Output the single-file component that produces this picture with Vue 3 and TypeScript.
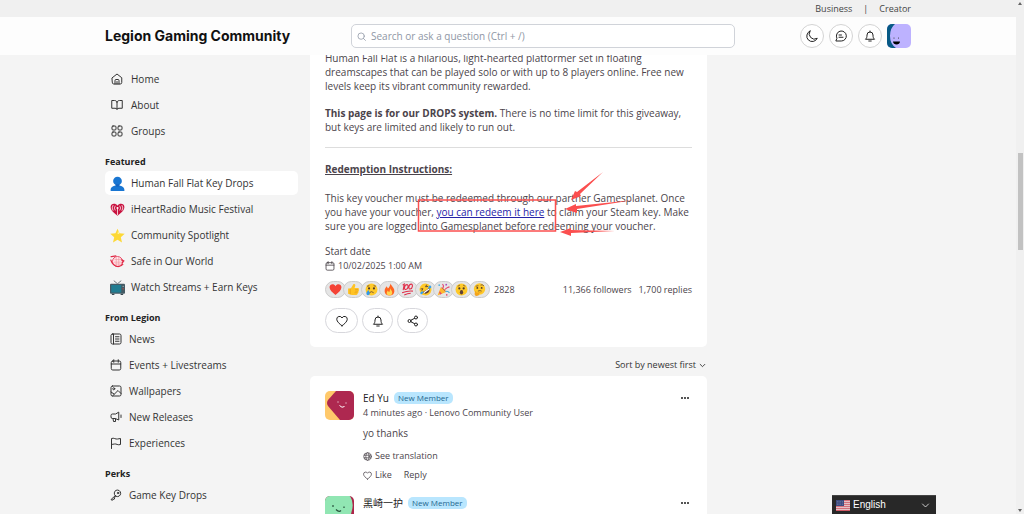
<script setup lang="ts">
import { ref } from 'vue'

interface NavItem {
  label: string
  icon: string
  color?: boolean
  active?: boolean
}
interface NavGroup {
  title?: string
  items: NavItem[]
}
interface Comment {
  name: string
  avatar: string
  meta: string
  body: string
}

const groups: NavGroup[] = [
  {
    items: [
      { label: 'Home', icon: 'home' },
      { label: 'About', icon: 'book' },
      { label: 'Groups', icon: 'grid' },
    ],
  },
  {
    title: 'Featured',
    items: [
      { label: 'Human Fall Flat Key Drops', icon: 'person', color: true, active: true },
      { label: 'iHeartRadio Music Festival', icon: 'iheart', color: true },
      { label: 'Community Spotlight', icon: 'star', color: true },
      { label: 'Safe in Our World', icon: 'globe-red', color: true },
      { label: 'Watch Streams + Earn Keys', icon: 'tv', color: true },
    ],
  },
  {
    title: 'From Legion',
    items: [
      { label: 'News', icon: 'news' },
      { label: 'Events + Livestreams', icon: 'calendar' },
      { label: 'Wallpapers', icon: 'image' },
      { label: 'New Releases', icon: 'horn' },
      { label: 'Experiences', icon: 'flag' },
    ],
  },
  {
    title: 'Perks',
    items: [{ label: 'Game Key Drops', icon: 'key' }],
  },
]

const reactions: string[] = ['heart', 'thumb', 'cry', 'fire', 'hundred', 'rofl', 'party', 'wow', 'think']

const comments: Comment[] = [
  { name: 'Ed Yu', avatar: 'av-red', meta: '4 minutes ago · Lenovo Community User', body: 'yo thanks' },
  { name: '黑崎一护', avatar: 'av-green', meta: '5 minutes ago · Lenovo Community User', body: 'thanks' },
]

const query = ref('')
const language = ref('English')
</script>

<template>
  <div class="shell">
    <svg class="defs" aria-hidden="true">
      <symbol id="home" viewBox="0 0 24 24"><path d="M2.500 9.500 12 2l9.500 7.500V19a3 3 0 0 1-3 3h-13a3 3 0 0 1-3-3zM8 22v-7a2 2 0 0 1 2-2h4a2 2 0 0 1 2 2v7M12 17v5" /></symbol>
      <symbol id="book" viewBox="0 0 24 24"><path d="M12 6v15M12 6c-1-2-3-3-5-3H1.500v15.500H8c2 0 3 .5 4 2 1-1.500 2-2 4-2h6.500V3H17c-2 0-4 1-5 3z" /></symbol>
      <symbol id="grid" viewBox="0 0 24 24"><rect x="2" y="2" width="8" height="8" rx="2" /><rect x="14" y="2" width="8" height="8" rx="2" /><rect x="2" y="14" width="8" height="8" rx="2" /><rect x="14" y="14" width="8" height="8" rx="2" /></symbol>
      <symbol id="news" viewBox="0 0 24 24"><rect x="2" y="2" width="20" height="20" rx="3" /><path d="M7 2v20M11 7.500h7M11 12h7M11 16.500h7" /></symbol>
      <symbol id="calendar" viewBox="0 0 24 24"><rect x="2.500" y="4" width="19" height="18" rx="3" /><path d="M2.500 10h19M7.500 1.500v5M16.500 1.500v5" /></symbol>
      <symbol id="image" viewBox="0 0 24 24"><rect x="2" y="2" width="20" height="20" rx="3" /><circle cx="7.500" cy="7.500" r="2" /><path d="M5 22 16 11l6 6M2 14l6 4" /></symbol>
      <symbol id="horn" viewBox="0 0 24 24"><path d="M17.500 3v15l-7-3H5a3 3 0 0 1-3-3V9a3 3 0 0 1 3-3h5.500zM6 15l1 6h4v-5M22 8v5" /></symbol>
      <symbol id="flag" viewBox="0 0 24 24"><path d="M3 23V3c5-2 8 2 12 1 2 0 4-1 6-1v12c-6 2-8-2-12-1-2 0-4 1-6 1" /></symbol>
      <symbol id="key" viewBox="0 0 24 24"><path d="m10.500 13.500-8 7V22H6l1-2h2v-3l3-2.500a6.500 6.500 0 1 0-1.500-1z" /><circle cx="16" cy="8" r="1.500" /></symbol>
      <symbol id="moon" viewBox="0 0 24 24"><path d="M8 2a11 11 0 1 0 14.500 14.500A10.500 10.500 0 0 1 8 2z" /></symbol>
      <symbol id="chat" viewBox="0 0 24 24"><path d="M2.500 22h10a10 10 0 1 0-9-6zM8 10h5M8 14.500h8" /></symbol>
      <symbol id="bell" viewBox="0 0 24 24"><path d="M3.500 18c2-2 2.500-4 2.500-8a6 6 0 0 1 12 0c0 4 .5 6 2.500 8zM9.500 22h5M12 2v2" /></symbol>
      <symbol id="like" viewBox="0 0 24 24"><path d="M12 21.500C7 18 1.500 13 1.500 8.500a5.500 5.500 0 0 1 10.500-2.500 5.500 5.500 0 0 1 10.500 2.500C22.500 13 17 18 12 21.500z" /></symbol>
      <symbol id="share" viewBox="0 0 24 24"><circle cx="5" cy="12" r="3" /><circle cx="18" cy="5" r="3" /><circle cx="18" cy="19" r="3" /><path d="m7.800 10.500 7.500-4M7.800 13.500l7.500 4" /></symbol>
      <symbol id="search" viewBox="0 0 24 24"><circle cx="11" cy="11" r="8.500" /><path d="m17.500 17.500 5 5" /></symbol>
      <symbol id="globe" viewBox="0 0 24 24"><circle cx="12" cy="12" r="10" /><ellipse cx="12" cy="12" rx="4.500" ry="10" /><path d="M3 8.500h18M3 15.500h18" /></symbol>
      <symbol id="chevron" viewBox="0 0 24 24"><path d="m4 8 8 8 8-8" /></symbol>

      <symbol id="person" viewBox="0 0 24 24"><circle cx="12" cy="8" r="7" fill="#1976d2" /><path d="M1 24v-2c0-5 5-6 7.500-7h7c2.500 1 7.500 2 7.500 7v2z" fill="#1976d2" /><path d="M9 13v3q3 2.500 6 0v-3z" fill="#1565c0" /></symbol>
      <symbol id="iheart" viewBox="0 0 24 24"><path d="M12 22C7 18 1 14 1 8c0-6 8-7 11-2 3-5 11-4 11 2 0 6-6 10-11 14z" fill="#c8123f" /><circle cx="12" cy="9.500" r="1.700" fill="#fff" /><path d="M12 11v10M8.500 6a6 6 0 0 0 0 7.500M15.500 6a6 6 0 0 1 0 7.500M5 5a8 8 0 0 0 0 9M19 5a8 8 0 0 1 0 9" fill="none" stroke="#fff" stroke-width="1.200" /></symbol>
      <symbol id="star" viewBox="0 0 24 24"><path d="m12 1 3.300 7.500 8.200.8-6.200 5.500 1.900 8.200L12 18.700 4.800 23l1.900-8.200L.5 9.300l8.200-.8z" fill="#fdd835" /><path d="m13 4 2 6-3-1z" fill="#fff59d" /></symbol>
      <symbol id="globe-red" viewBox="0 0 24 24"><circle cx="12" cy="12" r="8" fill="#ffe6e9" stroke="#e54360" stroke-width="1.500" /><path d="M1 4c3 1 7-1 9-1M1 9c2 6 6 11 12 11 4 0 6-1 8-4M18 9l4 2-3 4" fill="none" stroke="#e02945" stroke-width="2" /><path d="M7 9h11M6 13h13M8 16h9M10 6v12M14 5v14" stroke="#f0909d" stroke-width="1" /></symbol>
      <symbol id="tv" viewBox="0 0 24 24"><path d="m6 1 6 5 6-5" fill="none" stroke="#66737a" stroke-width="1.500" /><rect y="6" width="24" height="16" rx="1.500" fill="#455a64" /><rect x="2" y="8" width="16" height="12" fill="#207c91" /><circle cx="21" cy="10" r="1" fill="#b0bec5" /><circle cx="21" cy="14" r="1" fill="#f44336" /><path d="M3 22h4v2H3zM17 22h4v2h-4z" fill="#37474f" /></symbol>

      <symbol id="heart" viewBox="0 0 24 24"><path d="M12 22C6 18 1 13 1 8c0-6 8-8 11-2 3-6 11-4 11 2 0 5-5 10-11 14z" fill="#f44336" /></symbol>
      <symbol id="thumb" viewBox="0 0 24 24"><path d="M2 10h5l5-8c3-1 4 1 3 4l-1 3h6c2 0 3 2 1 3 2 1 1 3 0 3 1 2 0 3-1 3 0 2-1 4-3 4H9l-7-2z" fill="#ffc324" /><path d="M15 12h6M15 15h5M14 18h5M6 10v11" stroke="#e59a17" stroke-width="1.200" /></symbol>
      <symbol id="cry" viewBox="0 0 24 24"><circle cx="12" cy="12" r="11" fill="#ffc928" /><circle cx="7.500" cy="10" r="2" fill="#4b3828" /><circle cx="16.500" cy="10" r="2" fill="#4b3828" /><path d="M8 18q4-4 8 0M4 6l4-1M16 5l4 1" fill="none" stroke="#5d4037" stroke-width="1.500" /><path d="M6 13c-3 4-4 6-3 8 2 3 6 1 6-2 0-2-2-4-3-6z" fill="#3298e7" /></symbol>
      <symbol id="fire" viewBox="0 0 24 24"><path d="M14 1c1 5 7 7 7 14 0 5-4 8-9 8s-9-3-9-8c0-4 2-7 4-9l2 4c3-2 4-5 5-9z" fill="#ff6421" /><path d="M13 9c1 4 4 4 4 9 0 3-2 5-5 5s-6-2-5-6l2-3 2 3c2-2 2-5 2-8z" fill="#ffd54f" /></symbol>
      <symbol id="hundred" viewBox="0 0 24 24"><path d="m3 4 3-2-2 11M11 3c-5 0-6 10-2 9 5-1 5-9 2-9zM19 2c-5 0-6 10-2 9 5-1 5-9 2-9zM2 18q10-4 20-3M6 22q6-3 12-3" fill="none" stroke="#e0304a" stroke-width="2" /></symbol>
      <symbol id="rofl" viewBox="0 0 24 24"><g transform="rotate(-35 12 12)"><circle cx="12" cy="12" r="11" fill="#ffc928" /><path d="M5 13q7 2 14 0c0 9-14 9-14 0z" fill="#5d4037" /><path d="M6 14h12v2H6z" fill="#fff" /><path d="m5 6 4 2-4 2M19 6l-4 2 4 2" fill="none" stroke="#5d4037" stroke-width="1.500" /><ellipse cx="3" cy="13" rx="3" ry="2.500" fill="#34a0ea" /><ellipse cx="21" cy="13" rx="3" ry="2.500" fill="#34a0ea" /></g></symbol>
      <symbol id="party" viewBox="0 0 24 24"><path d="m1 23 6-15 9 9z" fill="#ffb82e" /><path d="m7 8 9 9q1-2-2-5t-7-4z" fill="#c66d1c" /><path d="M10 10c3-3 2-6 0-8M15 12c2-4 5-3 8-5" fill="none" stroke="#e8466a" stroke-width="2" /><path d="M16 16c3-2 5 0 7 2" fill="none" stroke="#36a8d8" stroke-width="2" /><circle cx="4" cy="4" r="1.500" fill="#3aa9dc" /><circle cx="17" cy="3" r="1.700" fill="#ae4bc0" /><circle cx="18" cy="22" r="1.500" fill="#eb4268" /><path d="m5 15 4 5-3 1-2-3z" fill="#e8466a" /></symbol>
      <symbol id="wow" viewBox="0 0 24 24"><circle cx="12" cy="12" r="11" fill="#ffc928" /><circle cx="8" cy="10" r="2" fill="#4b3828" /><circle cx="16" cy="10" r="2" fill="#4b3828" /><ellipse cx="12" cy="17" rx="3" ry="4" fill="#5d4037" /><path d="m5 6 4-2M15 4l4 2" stroke="#5d4037" stroke-width="1.300" /></symbol>
      <symbol id="think" viewBox="0 0 24 24"><circle cx="12" cy="11" r="10.500" fill="#ffc928" /><circle cx="8" cy="9" r="1.700" fill="#4b3828" /><circle cx="16" cy="9" r="1.700" fill="#4b3828" /><path d="m5 6 5-1M14 4q3-2 6 1M9 15q4-2 7 0" fill="none" stroke="#5d4037" stroke-width="1.400" /><path d="M4 15c2-1 2 3 3 3l7-2c2 0 2 2 0 2l-3 1c2 1 0 5-4 5s-5-4-3-9z" fill="#f4a51d" /></symbol>

      <symbol id="av-user" viewBox="0 0 24 24"><path d="M0 0h24v24H0z" fill="#bdb2ff" /><path d="M0 0h8Q3 4 3 12t6 12H0z" fill="#075985" /><circle cx="7" cy="14" r=".6" fill="#333" /><circle cx="11.500" cy="14" r=".6" fill="#333" /><path d="M6 17.500h7c0 4-7 4-7 0z" /></symbol>
      <symbol id="av-red" viewBox="0 0 29 29"><path d="M0 0h29v29H0z" fill="#ffc96b" /><path d="M11 0h18v29H15L3 15q-2-3 0-6z" fill="#ae2850" /><path d="M14.500 14.500q2.500 3 5 1M13 10.500v1M21 11.500v1" fill="none" stroke="#fff" stroke-width="1" /></symbol>
      <symbol id="av-green" viewBox="0 0 29 29"><path d="M0 0h29v29H0z" fill="#ad2449" /><path d="M0 0h25q4 6 2 14t-4 15H0z" fill="#91e6b3" /><path d="M11 13.500q3 3 5 1M8 9v2M19 10.500v1.500" fill="none" stroke="#27503b" stroke-width="1.200" /></symbol>
    </svg>

    <div class="page">
      <header class="head">
        <div class="top">
          <nav class="wrap top-links" aria-label="Sites">
            <a href="#business">Business</a><span>|</span><a href="#creator">Creator</a>
          </nav>
        </div>
        <div class="bar">
          <div class="wrap bar-in">
            <a class="brand" href="#home">Legion Gaming Community</a>
            <label class="search">
              <svg class="ico"><use href="#search" /></svg>
              <input v-model="query" type="search" aria-label="Search" placeholder="Search or ask a question (Ctrl + /)" />
            </label>
            <div class="tools">
              <button v-for="t in ['moon', 'chat', 'bell']" :key="t" class="round" :aria-label="t">
                <svg class="ico"><use :href="'#' + t" /></svg>
              </button>
              <button class="me" aria-label="Profile"><svg><use href="#av-user" /></svg></button>
            </div>
          </div>
        </div>
      </header>

      <div class="wrap columns">
        <nav class="side" aria-label="Community">
          <section v-for="(g, i) in groups" :key="i" class="group">
            <h2 v-if="g.title">{{ g.title }}</h2>
            <ul :class="{ wide: i < 2 }">
              <li v-for="n in g.items" :key="n.label">
                <a :href="'#' + n.icon" :class="{ active: n.active }">
                  <svg :class="n.color ? 'pic' : 'ico'"><use :href="'#' + n.icon" /></svg>
                  <span>{{ n.label }}</span>
                </a>
              </li>
            </ul>
          </section>
        </nav>

        <main class="feed">
          <article class="card post">
            <div class="prose">
              <p>Human Fall Flat is a hilarious, light-hearted platformer set in floating<br />dreamscapes that can be played solo or with up to 8 players online. Free new<br />levels keep its vibrant community rewarded.</p>
              <p><strong>This page is for our DROPS system.</strong> There is no time limit for this giveaway,<br />but keys are limited and likely to run out.</p>
              <hr />
              <h3>Redemption Instructions:</h3>
              <div class="marked">
                <p>This key voucher must be redeemed through our partner Gamesplanet. Once<br />you have your voucher, <a href="#redeem">you can redeem it here</a> to claim your Steam key. Make<br />sure you are logged into Gamesplanet before redeeming your voucher.</p>
                <svg class="marks" viewBox="0 0 310 70" aria-hidden="true">
                  <rect x="93.500" y="29" width="137" height="31" fill="none" stroke="#fb4f4f" stroke-width="1.500" />
                  <g fill="#fb4f4f">
                    <path d="m278 1-23 22 1 2-10 4 4-9 2 1z" />
                    <path d="m309 29-57 9v4l-12-4 11-5v2z" />
                    <path d="m290 60-44 2v3l-11-4 11-4v2z" />
                  </g>
                </svg>
              </div>
            </div>
            <div class="start">
              <span class="start-label">Start date</span>
              <span class="date"><svg class="ico"><use href="#calendar" /></svg>10/02/2025 1:00 AM</span>
            </div>
            <div class="stats">
              <div class="reactions">
                <button v-for="r in reactions" :key="r" :aria-label="r"><svg><use :href="'#' + r" /></svg></button>
              </div>
              <span>2828</span>
              <span class="followers">11,366 followers</span>
              <span>1,700 replies</span>
            </div>
            <div class="actions">
              <button v-for="a in ['like', 'bell', 'share']" :key="a" :aria-label="a">
                <svg class="ico"><use :href="'#' + a" /></svg>
              </button>
            </div>
          </article>

          <button class="sort">Sort by newest first <svg class="ico"><use href="#chevron" /></svg></button>

          <section class="card comments">
            <article v-for="c in comments" :key="c.name" class="comment">
              <svg class="avatar" aria-hidden="true"><use :href="'#' + c.avatar" /></svg>
              <div class="comment-main">
                <div class="who"><a href="#member">{{ c.name }}</a><span class="badge">New Member</span></div>
                <div class="meta">{{ c.meta }}</div>
                <p>{{ c.body }}</p>
                <button class="translate"><svg class="ico"><use href="#globe" /></svg>See translation</button>
                <div class="replies">
                  <button><svg class="ico"><use href="#like" /></svg>Like</button>
                  <button>Reply</button>
                </div>
              </div>
              <button class="more" aria-label="More"><i></i><i></i><i></i></button>
            </article>
          </section>
        </main>
      </div>
    </div>

    <div class="scroll" aria-hidden="true">
      <svg viewBox="0 0 8 8"><path d="m4 2 2 3H2z" /></svg>
      <div class="track"><div class="thumb"></div></div>
      <svg viewBox="0 0 8 8"><path d="m4 6 2-3H2z" /></svg>
    </div>

    <div class="lang">
      <svg class="us" viewBox="0 0 14 11" aria-hidden="true">
        <path d="M0 0h14v11H0z" fill="#ead9dc" />
        <path d="M0 .7h14M0 2.700h14M0 4.700h14M0 6.700h14M0 8.700h14M0 10.500h14" stroke="#cf5965" />
        <path d="M0 0h8v6H0z" fill="#3d4c80" />
        <path d="M1 1.500h6M1 3h6M1 4.500h6" stroke="#8d97b8" stroke-width=".6" stroke-dasharray=".7 1" />
      </svg>
      <select v-model="language" aria-label="Language"><option>English</option></select>
      <svg class="ico"><use href="#chevron" /></svg>
    </div>
  </div>
</template>

<style>
body {
  background: #f4f4f4;
}
</style>

<style scoped>
* {
  box-sizing: border-box;
}
.shell {
  height: 100vh;
  display: flex;
  overflow: hidden;
  background: #f4f4f4;
  color: #333;
  font: 10px/14px 'Open Sans', 'Noto Sans CJK SC', sans-serif;
}
.defs {
  position: absolute;
  width: 0;
  height: 0;
}
button,
input,
select {
  font: inherit;
  color: inherit;
  padding: 0;
  border: 0;
  background: none;
}
a {
  color: inherit;
  text-decoration: none;
}
svg {
  display: block;
  flex: none;
}
.ico {
  width: 12px;
  height: 12px;
  fill: none;
  stroke: currentColor;
  stroke-width: 2;
  stroke-linecap: round;
  stroke-linejoin: round;
}
.page {
  flex: 1;
  min-width: 0;
  overflow: hidden;
}
.wrap {
  width: 100%;
  max-width: 806px;
  margin: 0 auto;
}
.top {
  background: #f0f0f0;
}
.top-links {
  display: flex;
  justify-content: flex-end;
  gap: 11px;
  font-size: 9px;
  line-height: 17px;
  color: #444;
}
.bar {
  background: #fdfdfd;
}
.bar-in {
  display: grid;
  grid-template-columns: 246px minmax(0, 1fr) 176px;
  align-items: center;
  padding: 7px 0;
}
.brand {
  font: 700 14px/20px Inter, sans-serif;
  color: #111;
}
.search {
  height: 24px;
  display: flex;
  align-items: center;
  gap: 5px;
  padding: 0 5px;
  border: 1px solid #d0d3d9;
  border-radius: 5px;
  background: #fff;
  color: #8b93a1;
}
.search .ico {
  width: 9px;
  height: 9px;
}
.search input {
  flex: 1;
  min-width: 0;
  outline: 0;
}
.search input::placeholder {
  color: #8f97a5;
}
.tools {
  display: flex;
  justify-content: flex-end;
  gap: 5px;
}
.round {
  width: 24px;
  height: 24px;
  display: grid;
  place-items: center;
  border: 1px solid #d4d4d4;
  border-radius: 50%;
  background: #fff;
  color: #222;
}
.me svg {
  width: 24px;
  height: 24px;
  border-radius: 5px;
}
.columns {
  display: grid;
  grid-template-columns: 193px minmax(0, 1fr) 192px;
  gap: 12px;
}
.side {
  padding-top: 12px;
}
.group {
  margin-bottom: 12px;
}
h2 {
  margin: 0;
  font-size: 9px;
  line-height: 14px;
  font-weight: 700;
  color: #222;
}
ul {
  list-style: none;
  margin: 0;
  padding: 0;
  display: grid;
  gap: 2px;
}
h2 + ul {
  margin-top: 2px;
}
li a {
  height: 24px;
  display: flex;
  align-items: center;
  gap: 7px;
  padding: 0 5px;
  border-radius: 5px;
}
li a.active {
  background: #fff;
}
.wide .ico {
  margin: 0 1px;
}
.wide .pic {
  width: 15px;
  height: 15px;
  margin-right: -1px;
}
.card {
  background: #fff;
  padding: 0 15px;
}
.post {
  overflow: hidden;
  border-radius: 0 0 5px 5px;
  padding-bottom: 14px;
  color: #4b444b;
}
.prose p {
  margin: 0 0 13px;
  white-space: nowrap;
}
.prose > p:first-child {
  margin-top: -4px;
}
hr {
  margin: 0 0 14px;
  border: 0;
  border-top: 1px solid #ddd;
}
h3 {
  margin: 0 0 15px;
  font-size: 10px;
  line-height: 14px;
  text-decoration: underline;
}
.marked {
  position: relative;
}
.prose .marked p {
  margin-bottom: 11px;
}
.marked a {
  color: #2522a8;
  text-decoration: underline;
}
.marks {
  position: absolute;
  left: 0;
  top: -20px;
  width: 310px;
  height: 70px;
}
.start {
  display: grid;
  gap: 1px;
}
.date {
  display: flex;
  align-items: center;
  gap: 3px;
  font-size: 9px;
}
.date .ico {
  width: 10px;
  height: 10px;
}
.stats {
  display: flex;
  align-items: center;
  gap: 7px;
  margin-top: 8px;
  font-size: 9px;
}
.reactions {
  display: flex;
  margin-right: -3px;
}
.reactions button {
  width: 21px;
  height: 17px;
  display: grid;
  place-items: center;
  border: 1px solid #ccc;
  border-radius: 9px;
  background: #e5e5e5;
}
.reactions button + button {
  margin-left: -3px;
}
.reactions svg {
  width: 13px;
  height: 13px;
}
.followers {
  margin-left: auto;
}
.actions {
  display: flex;
  gap: 4px;
  margin-top: 10px;
}
.actions button {
  width: 31px;
  height: 25px;
  display: grid;
  place-items: center;
  border: 1px solid #d7d7dc;
  border-radius: 13px;
  color: #222;
}
.actions button:first-child {
  width: 33px;
}
.sort {
  display: flex;
  align-items: center;
  gap: 3px;
  margin: 11px 1px 4px auto;
  font-size: 9px;
  line-height: 14px;
}
.sort .ico {
  width: 7px;
  height: 7px;
  stroke-width: 3;
}
.comments {
  border-radius: 5px;
  padding-top: 15px;
}
.comment {
  display: flex;
  gap: 9px;
  padding-bottom: 14px;
}
.avatar {
  width: 29px;
  height: 29px;
  border-radius: 5px;
}
.comment-main {
  flex: 1;
  color: #4b444b;
}
.who {
  display: flex;
  align-items: center;
  gap: 5px;
  line-height: 14px;
  color: #222;
}
.badge {
  padding: 0 4px;
  border-radius: 5px;
  background: #b9e6fe;
  color: #23678f;
  font-size: 8px;
  line-height: 12px;
}
.meta {
  margin-top: 1px;
  font-size: 9px;
}
.comment p {
  margin: 6px 0 9px;
}
.comment button {
  display: flex;
  align-items: center;
  gap: 3px;
  font-size: 9px;
  line-height: 14px;
}
.comment button .ico {
  width: 9px;
  height: 9px;
}
.replies {
  display: flex;
  gap: 12px;
  margin-top: 5px;
}
.comment .more {
  gap: 1px;
  height: 14px;
  margin-right: 3px;
}
.more i {
  width: 2px;
  height: 2px;
  background: #555;
}
.scroll {
  width: 8px;
  display: flex;
  flex-direction: column;
  background: #f0f0f0;
}
.scroll svg {
  width: 8px;
  height: 8px;
  fill: #666;
}
.track {
  flex: 1;
  padding: 145px 1px 0 2px;
}
.thumb {
  height: 97px;
  background: #c2c2c2;
}
.lang {
  position: fixed;
  right: 88px;
  bottom: 0;
  width: 104px;
  display: flex;
  align-items: center;
  gap: 3px;
  padding: 0 6px 0 4px;
  border-top: 1px solid #444;
  background: #282828;
  color: #fff;
}
.us {
  width: 14px;
  height: 11px;
}
.lang select {
  flex: 1;
  appearance: none;
  font: 10px/18px 'Liberation Sans', Arial, sans-serif;
  outline: 0;
}
.lang .ico {
  width: 9px;
  height: 9px;
}
</style>
